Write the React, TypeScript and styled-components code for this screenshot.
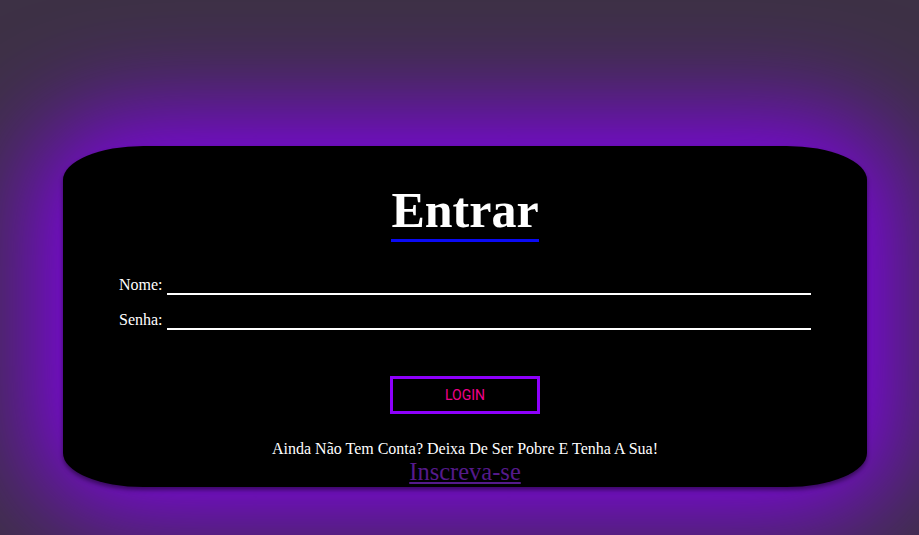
import React from "react";
import styled, { createGlobalStyle } from "styled-components";

const Global = createGlobalStyle`
  html, body {
    margin: 0;
    padding: 0;
    min-height: 100%;
    background: #3d3145;
    overflow: hidden;
  }
  body {
    font-family: "Liberation Serif", "Times New Roman", serif;
  }
`;

const Page = styled.div`
  width: 919px;
  height: 535px;
  padding: 146px 0 0 63px;
  box-sizing: border-box;
`;

const Card = styled.div`
  width: 804px;
  height: 341px;
  box-sizing: border-box;
  background: #000;
  border-radius: 10%;
  padding: 36px 56px 0;
  box-shadow: 0 3px 4px rgba(0, 0, 0, 0.45), 0 0 110px 30px #8200ec;
  display: flex;
  flex-direction: column;
  align-items: center;
  color: #fff;
`;

const Title = styled.h1`
  margin: 0;
  font-family: "Liberation Serif", "Times New Roman", serif;
  font-size: 50px;
  font-weight: bold;
  line-height: 57px;
  padding-bottom: 0;
  border-bottom: 3px solid #0a0af5;
  color: #fff;
`;

const Form = styled.form`
  align-self: stretch;
  display: flex;
  flex-direction: column;
  gap: 15px;
  margin-top: 33px;
`;

const Row = styled.div`
  display: flex;
  align-items: flex-end;
  gap: 4px;
`;

const Label = styled.label`
  font-size: 16px;
  line-height: 18px;
  padding-bottom: 1px;
  color: #fff;
`;

const Input = styled.input`
  flex: 1;
  height: 20px;
  box-sizing: border-box;
  background: transparent;
  border: none;
  border-bottom: 2px solid #fff;
  color: #fff;
  outline: none;
  padding: 0;
`;

const Button = styled.button`
  align-self: center;
  width: 150px;
  height: 38px;
  margin-top: 31px;
  background: #000;
  border: 3px solid #8e00fb;
  color: #f0008a;
  font-family: Roboto, "Liberation Sans", Arial, sans-serif;
  font-size: 14px;
  font-weight: 400;
  cursor: pointer;
`;

const Note = styled.p`
  margin: 26px 0 0;
  font-size: 16px;
  line-height: 18px;
  color: #fff;
`;

const SignUp = styled.a`
  font-size: 24.5px;
  line-height: 27px;
  color: #551a8b;
  text-decoration: underline;
`;

export default function App() {
  return (
    <>
      <Global />
      <Page>
        <Card>
          <Title>Entrar</Title>
          <Form onSubmit={(e) => e.preventDefault()}>
            <Row>
              <Label htmlFor="nome">Nome:</Label>
              <Input id="nome" type="text" />
            </Row>
            <Row>
              <Label htmlFor="senha">Senha:</Label>
              <Input id="senha" type="password" />
            </Row>
            <Button type="submit">LOGIN</Button>
          </Form>
          <Note>Ainda Não Tem Conta? Deixa De Ser Pobre E Tenha A Sua!</Note>
          <SignUp href="#">Inscreva-se</SignUp>
        </Card>
      </Page>
    </>
  );
}
